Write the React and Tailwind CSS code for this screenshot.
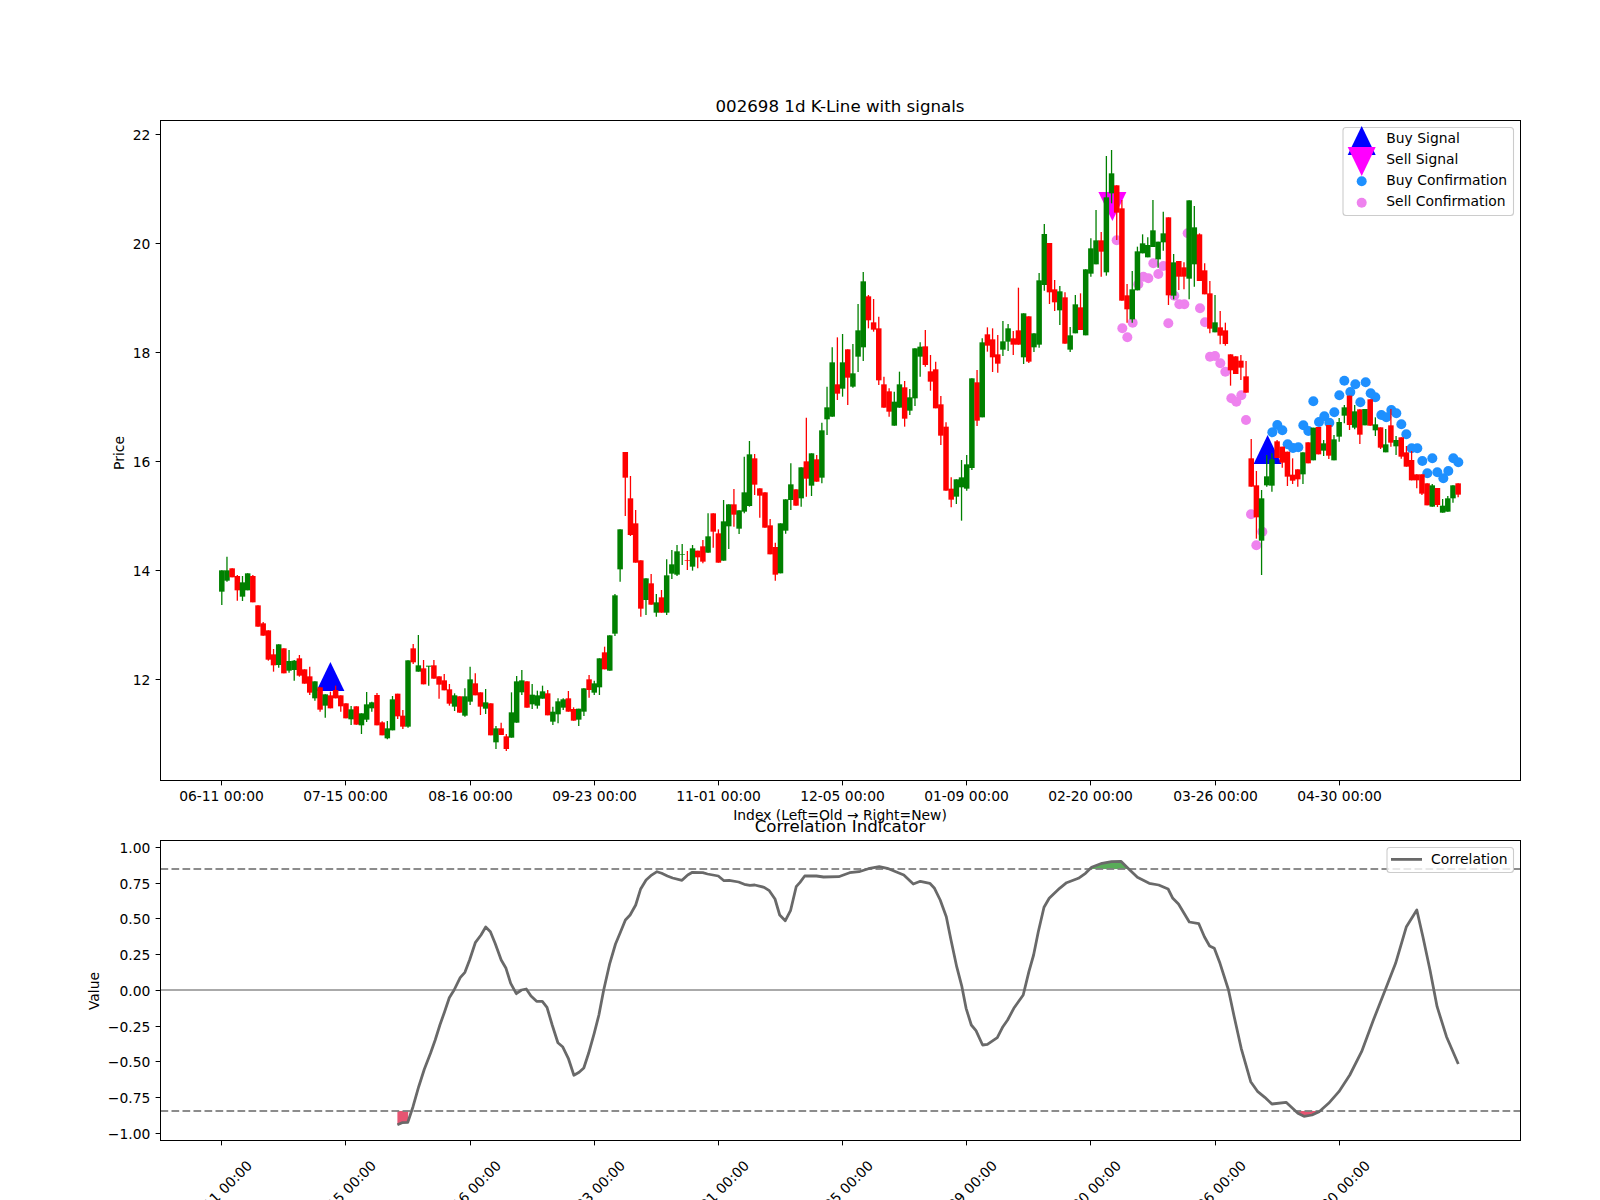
import React from 'react';

const W = 1600;
const AX_L = 160.5;
const AX_R = 1520.5;

// candle index -> px, 240 bars with 5% margins
const barX = (i) => 221.8 + i * 5.173;
const TICKS = ['06-11', '07-15', '08-16', '09-23', '11-01', '12-05', '01-09', '02-20', '03-26', '04-30'];
const tickX = (n) => Math.floor(barX(n * 24)) + 0.5;

const UP = '#008000';
const DOWN = '#ff0000';

// [up, bodyTop, bodyBottom, wickTop, wickBottom] -- y measured on a 3x scale from `base`
const seg = (base, rows) =>
  rows.map(([up, t, b, wt = t, wb = b]) => ({
    up,
    t: base + t / 3,
    b: base + b / 3,
    wt: base + wt / 3,
    wb: base + wb / 3,
  }));

const CANDLES = [
  ...seg(400, [
    [1, 511, 575, 511, 615], [1, 511, 542, 470, 545], [0, 505, 532], [0, 528, 571, 525, 602], [1, 547, 590, 528, 603],
    [1, 520, 571], [0, 528, 607, 525, 607], [0, 616, 680], [0, 670, 707, 666, 707], [0, 691, 779, 691, 782],
    [0, 763, 796, 747, 815], [1, 733, 795, 733, 803], [0, 745, 820], [1, 783, 812, 750, 818], [1, 782, 810, 780, 842],
    [0, 775, 827, 765, 830], [0, 808, 851], [0, 829, 878, 800, 885], [1, 844, 895, 844, 902], [0, 862, 929, 862, 935],
    [1, 883, 917, 883, 953], [0, 886, 925, 875, 925], [0, 870, 895, 857, 895], [0, 886, 919, 886, 935], [0, 910, 955],
    [1, 928, 958, 918, 975], [0, 919, 974], [1, 940, 976, 940, 1002], [1, 913, 959, 876, 966], [1, 907, 925, 905, 935],
    [0, 885, 976, 879, 976], [0, 967, 1006, 964, 1006], [1, 985, 1015, 963, 1018], [1, 898, 991, 888, 991], [0, 881, 949, 881, 957],
    [0, 947, 980, 930, 987], [1, 781, 980, 781, 983], [0, 745, 787, 732, 792], [1, 796, 815, 705, 815], [0, 805, 853, 780, 853],
    [1, 797, 800, 798, 857], [0, 796, 836, 780, 836], [0, 829, 854, 829, 896], [0, 841, 871, 822, 871], [0, 868, 911, 852, 917],
    [1, 886, 920, 880, 933], [0, 889, 938], [1, 889, 947, 865, 950], [1, 838, 905, 800, 915], [0, 850, 886, 820, 886],
    [0, 877, 920, 877, 945], [1, 907, 926, 867, 942], [0, 910, 1006], [1, 985, 1027, 978, 1047], [0, 985, 1005, 968, 1005],
    [0, 1009, 1047, 1002, 1053], [1, 937, 1013, 877, 1013], [1, 844, 968, 828, 968], [1, 841, 877, 810, 885], [0, 844, 923],
    [1, 884, 913, 852, 927], [1, 886, 917, 872, 926], [1, 874, 896, 857, 896], [0, 880, 946, 870, 946], [1, 935, 965, 920, 975],
    [1, 904, 943, 895, 970], [1, 898, 923, 895, 930], [0, 895, 935, 873, 935], [0, 927, 962, 922, 962], [1, 926, 959, 926, 978],
    [1, 865, 935, 865, 948], [0, 838, 870, 825, 893], [1, 850, 878, 842, 885], [1, 775, 862, 775, 885], [0, 757, 808, 740, 808],
    [1, 706, 812], [1, 586, 701, 582, 708],
  ]),
  ...seg(250, [
    [1, 838, 958, 838, 995], [0, 606, 683, 606, 798], [0, 745, 855, 678, 858], [0, 820, 938, 780, 938], [0, 931, 1076, 931, 1100],
    [1, 985, 1050, 985, 1095], [0, 1000, 1064, 972, 1064], [1, 1057, 1088, 1032, 1100], [0, 1042, 1088, 1020, 1088], [1, 976, 1088, 928, 1095],
    [1, 943, 971, 900, 987], [1, 904, 974, 885, 978], [1, 912, 914, 882, 945], [0, 930, 932, 903, 960], [1, 895, 950, 885, 962],
    [0, 902, 922, 902, 955], [0, 889, 935, 870, 940], [1, 859, 908, 790, 908], [0, 790, 845, 790, 893], [0, 850, 938, 838, 938],
    [1, 814, 932, 750, 932], [1, 763, 829, 763, 897], [0, 763, 794, 717, 830], [1, 781, 836, 781, 852], [1, 727, 785, 620, 790],
    [1, 613, 768, 573, 770], [0, 625, 704, 612, 735], [0, 715, 737, 715, 803], [0, 727, 833], [0, 826, 913, 807, 913],
    [0, 891, 974, 878, 992], [1, 820, 970], [1, 748, 842, 748, 851], [1, 703, 750, 640, 780], [0, 718, 767],
    [1, 652, 745, 652, 770], [0, 634, 686, 503, 740], [1, 610, 707, 610, 738], [0, 628, 695, 615, 695], [1, 541, 683, 518, 700],
    [1, 472, 508, 410, 555], [1, 337, 500, 292, 500], [0, 403, 431, 262, 450], [1, 337, 416, 252, 440], [0, 298, 383, 298, 465],
    [1, 370, 410, 282, 413], [1, 241, 320, 162, 366], [1, 94, 292, 66, 333], [0, 139, 211, 135, 235], [0, 217, 239, 147, 245],
    [0, 235, 391, 200, 405], [0, 403, 473, 380, 473], [0, 424, 485, 415, 500], [1, 455, 527, 425, 527], [1, 403, 473, 365, 473],
    [0, 412, 506, 393, 530], [1, 442, 482, 417, 495], [1, 295, 445, 295, 468], [1, 290, 320, 277, 380], [0, 289, 345, 240, 350],
    [0, 364, 395, 315, 422], [0, 358, 475, 335, 475], [0, 463, 557, 438, 585], [0, 530, 722, 517, 722], [0, 716, 749, 682, 772],
    [1, 688, 740, 688, 762], [1, 682, 712, 630, 812], [1, 643, 716, 615, 722], [1, 385, 654, 385, 660], [0, 397, 512, 360, 528],
    [1, 277, 502, 265, 502], [0, 253, 287, 232, 305], [0, 268, 322, 235, 366], [0, 313, 341, 255, 368], [1, 274, 299, 213, 318],
    [1, 235, 275, 222, 303], [0, 265, 284, 243, 315], [0, 241, 284, 113, 284], [1, 190, 322, 190, 342], [0, 199, 335, 199, 339],
    [1, 250, 292, 250, 306], [1, 91, 284, 69, 293], [1, -48, 105, -78, 122], [0, -21, 127, -21, 162], [0, 118, 157, 90, 183],
    [1, 124, 181, 108, 225], [0, 142, 281, 127, 281], [1, 256, 299, 231, 306], [1, 163, 250, 135, 250],
  ]),
  ...seg(100, [
    [0, 622, 690, 580, 690], [1, 508, 706], [1, 445, 521, 415, 530], [1, 421, 493, 330, 493], [0, 421, 455, 396, 530],
    [1, 292, 517, 168, 527], [1, 220, 280, 150, 310], [0, 256, 338, 256, 420], [0, 325, 602, 300, 602], [0, 586, 628, 552, 668],
    [1, 568, 658, 513, 668], [1, 454, 571, 440, 571], [1, 430, 460, 403, 460], [1, 435, 472, 412, 472], [1, 391, 441, 300, 441],
    [1, 425, 478, 425, 503], [1, 400, 427, 335, 452], [0, 352, 586, 352, 615], [1, 487, 587, 462, 598], [0, 483, 530, 483, 570],
    [0, 502, 530, 487, 568], [1, 301, 536, 301, 598], [1, 382, 493, 318, 560], [0, 403, 543, 400, 543], [0, 511, 583, 490, 583],
    [0, 580, 686, 543, 700], [1, 667, 697, 585, 697], [0, 682, 707, 633, 733], [0, 691, 732, 668, 737], [0, 763, 811, 763, 857],
    [0, 769, 822], [0, 782, 803, 765, 840], [0, 829, 878, 783, 878],
  ]),
  ...seg(380, [
    [0, 235, 320, 177, 320], [0, 316, 412, 273, 476], [1, 355, 482, 330, 585], [1, 289, 316, 225, 320], [1, 238, 317, 220, 335],
    [0, 184, 234, 180, 234], [0, 200, 248, 200, 263], [0, 215, 290, 215, 318], [0, 284, 302, 235, 312], [0, 268, 298, 268, 320],
    [1, 217, 283, 217, 312], [0, 187, 250], [1, 143, 241], [0, 141, 223], [1, 190, 212, 180, 228],
    [0, 135, 227, 135, 237], [1, 178, 241, 165, 241], [1, 126, 170, 114, 185], [1, 82, 107, 75, 130], [0, 47, 135, 47, 150],
    [1, 94, 143, 75, 148], [0, 88, 164, 88, 192], [1, 87, 136], [0, 58, 137], [1, 133, 151, 112, 168],
    [0, 142, 203, 142, 207], [1, 193, 217, 147, 217], [0, 136, 188, 87, 200], [1, 180, 199, 168, 225], [0, 172, 230, 172, 236],
    [0, 217, 260, 198, 260], [0, 240, 301, 213, 301], [0, 283, 301, 283, 325], [0, 283, 341, 283, 345], [0, 310, 376],
    [1, 316, 380, 312, 380], [0, 324, 375, 324, 381], [1, 377, 398, 357, 398], [1, 355, 395, 348, 395], [1, 316, 355, 316, 368],
    [0, 310, 344, 310, 352],
  ]),
];

// scatter points, read off the 3x view starting at (ox, oy)
const at = (ox, oy, pts) => pts.map(([x, y]) => [ox + x / 3, oy + y / 3]);

const SELL_CONFIRM = [
  ...at(1060, 100, [
    [170, 421], [250, 530], [265, 535], [295, 522], [280, 490], [310, 498], [235, 553], [218, 668], [187, 685], [202, 712],
    [325, 670], [343, 587], [358, 613], [373, 613], [420, 625], [435, 667], [383, 400], [450, 770], [465, 768], [481, 790],
    [496, 815], [514, 895], [529, 905], [544, 886], [558, 960],
  ]),
  ...at(1100, 380, [[453, 403], [487, 455], [469, 496]]),
];

const BUY_CONFIRM = [
  ...at(1100, 380, [
    [517, 157], [532, 135], [547, 151], [563, 193], [579, 204], [595, 202], [610, 136], [625, 153], [640, 64], [657, 126],
    [673, 109], [688, 128], [703, 97], [718, 46], [751, 36], [781, 67], [812, 40], [826, 52], [844, 105], [859, 112],
    [874, 90], [889, 100], [904, 133], [919, 163], [935, 205], [952, 205], [967, 243], [982, 280], [997, 235], [1012, 277],
    [1030, 295], [1045, 273], [1060, 235], [1075, 247],
  ]),
  ...at(1060, 100, [[853, 842], [886, 853], [917, 847]]),
];

// correlation line, the view was 2.119x wide / 3x tall
const corrPt = (ox) => ([x, y]) => [ox + x / 2.119, 820 + y / 3];
const CORR = [
  ...[
    [715, 914], [725, 908], [737, 907], [748, 860], [760, 800], [772, 748], [785, 700], [795, 660], [805, 615], [815, 575],
    [825, 533], [835, 510], [848, 473], [858, 457], [868, 420], [880, 368], [892, 345], [902, 321], [912, 335], [922, 370],
    [935, 420], [945, 445], [955, 490], [967, 521], [978, 510], [988, 507], [998, 528], [1010, 544], [1022, 544], [1032, 562],
    [1043, 615], [1055, 668], [1065, 680], [1077, 715], [1089, 766], [1100, 757], [1110, 744], [1120, 700], [1132, 640], [1142, 585],
    [1152, 510], [1165, 430], [1177, 372], [1187, 338], [1198, 300], [1208, 285], [1220, 255], [1230, 208], [1242, 180], [1252, 167],
    [1265, 155], [1275, 160], [1287, 168], [1298, 174], [1318, 181], [1330, 165], [1340, 157], [1362, 158], [1372, 162], [1395, 168],
    [1407, 182], [1418, 181], [1438, 186], [1450, 193], [1462, 196], [1472, 195], [1492, 202], [1503, 212], [1515, 237], [1525, 285],
    [1537, 302], [1548, 272], [1560, 200],
  ].map(corrPt(60)),
  ...[
    [0, 187], [10, 168], [35, 168], [50, 171], [82, 170], [105, 158], [125, 155], [145, 146], [168, 140], [185, 145],
    [220, 165], [240, 192], [255, 184], [275, 190], [285, 205], [297, 240], [310, 290], [320, 360], [332, 440], [343, 500],
    [352, 565], [363, 615], [373, 632], [387, 675], [397, 673], [418, 653], [430, 620], [440, 600], [453, 565], [473, 525],
    [485, 455], [495, 405], [505, 335], [517, 262], [528, 235], [550, 205], [565, 188], [590, 175], [605, 160], [618, 142],
    [640, 130], [660, 125], [680, 124], [695, 145], [715, 172], [740, 190], [760, 195], [780, 207], [790, 235], [802, 252],
    [825, 306], [845, 311], [857, 350], [868, 378], [878, 385], [890, 430], [908, 510], [920, 590], [935, 685], [955, 785],
    [970, 815], [985, 832], [1000, 852], [1030, 847], [1055, 880], [1068, 889], [1085, 885], [1100, 875], [1120, 850], [1142, 815],
    [1165, 765], [1190, 695], [1215, 600], [1240, 510], [1262, 430], [1285, 320], [1307, 270], [1320, 350], [1335, 450], [1350, 560],
    [1370, 650], [1395, 732],
  ].map(corrPt(800)),
];

const toPoints = (pts) => pts.map(([x, y]) => `${x.toFixed(1)},${y.toFixed(1)}`).join(' ');

const FILL_LOW_A = [[715, 873], [738, 873], [737, 907], [725, 908], [715, 914]].map(corrPt(60));
const FILL_LOW_B = [[1050, 873], [1068, 889], [1085, 885], [1097, 873]].map(corrPt(800));
const FILL_HIGH = [[612, 147], [640, 130], [660, 125], [680, 124], [697, 147]].map(corrPt(800));

const priceY = (p) => Math.floor(679.3 - (p - 12) * 54.5) + 0.5;
const corrY = (v) => Math.floor(990.3 - v * 143) + 0.5;
const CORR_TICKS = [
  [1, '1.00'], [0.75, '0.75'], [0.5, '0.50'], [0.25, '0.25'], [0, '0.00'],
  [-0.25, '−0.25'], [-0.5, '−0.50'], [-0.75, '−0.75'], [-1, '−1.00'],
];

const Tri = ({ x, y, up, fill }) => (
  <polygon
    points={up ? `${x},${y} ${x - 14},${y + 29} ${x + 14},${y + 29}` : `${x},${y} ${x - 14},${y - 29} ${x + 14},${y - 29}`}
    fill={fill}
  />
);

const Candle = ({ c, i }) => {
  const x = barX(i);
  const color = c.up ? UP : DOWN;
  return (
    <g>
      <line x1={x} x2={x} y1={c.wt} y2={c.wb} stroke={color} strokeWidth="1.3" />
      <rect x={x - 2.75} y={c.t} width="5.5" height={Math.max(c.b - c.t, 0.6)} fill={color} />
    </g>
  );
};

const PricePanel = () => (
  <svg viewBox={`0 0 ${W} 820`} className="block w-[1600px] h-[820px] overflow-visible">
    <text x="840" y="111.5" textAnchor="middle" fontSize="16.67">002698 1d K-Line with signals</text>

    {SELL_CONFIRM.map(([x, y], i) => <circle key={i} cx={x} cy={y} r="5" fill="#ee82ee" />)}
    {BUY_CONFIRM.map(([x, y], i) => <circle key={i} cx={x} cy={y} r="5" fill="#1e90ff" />)}
    <Tri x={330.4} y={662} up fill="#0000ff" />
    <Tri x={1267.6} y={435} up fill="#0000ff" />
    <Tri x={1112.4} y={221} fill="#ff00ff" />

    {CANDLES.map((c, i) => <Candle key={i} c={c} i={i} />)}

    <rect x={AX_L} y="120.5" width={AX_R - AX_L} height="660" fill="none" stroke="#000" strokeWidth="1" />

    {[12, 14, 16, 18, 20, 22].map((p) => (
      <g key={p}>
        <line x1={AX_L - 4.9} x2={AX_L} y1={priceY(p)} y2={priceY(p)} stroke="#000" strokeWidth="1" />
        <text x="150.3" y={priceY(p) + 5} textAnchor="end" fontSize="13.89">{p}</text>
      </g>
    ))}
    {TICKS.map((t, n) => (
      <g key={t}>
        <line x1={tickX(n)} x2={tickX(n)} y1="780.5" y2="785.4" stroke="#000" strokeWidth="1" />
        <text x={tickX(n)} y="801" textAnchor="middle" fontSize="13.89">{t} 00:00</text>
      </g>
    ))}
    <text x="840" y="820" textAnchor="middle" fontSize="13.89">Index (Left=Old → Right=New)</text>
    <text transform="translate(124 453) rotate(-90)" textAnchor="middle" fontSize="13.89">Price</text>

    {/* legend */}
    <rect x="1343" y="127.5" width="170.5" height="88" rx="3" fill="#fff" fillOpacity="0.8" stroke="#ccc" strokeWidth="1.1" />
    <Tri x={1361.7} y={126} up fill="#0000ff" />
    <Tri x={1361.7} y={176} fill="#ff00ff" />
    <circle cx="1361.7" cy="181.3" r="5" fill="#1e90ff" />
    <circle cx="1361.7" cy="202.8" r="5" fill="#ee82ee" />
    {['Buy Signal', 'Sell Signal', 'Buy Confirmation', 'Sell Confirmation'].map((t, i) => (
      <text key={t} x="1386.3" y={142.7 + i * 21} fontSize="13.89">{t}</text>
    ))}
  </svg>
);

const CorrelationPanel = () => (
  <svg viewBox={`0 820 ${W} 380`} className="block w-[1600px] h-[380px] overflow-visible">
    <text x="840" y="831.5" textAnchor="middle" fontSize="16.67">Correlation Indicator</text>

    <polygon points={toPoints(FILL_LOW_A)} fill="#dc143c" fillOpacity="0.72" />
    <polygon points={toPoints(FILL_LOW_B)} fill="#dc143c" fillOpacity="0.72" />
    <polygon points={toPoints(FILL_HIGH)} fill="#008000" fillOpacity="0.65" />

    <line x1={AX_L} x2={AX_R} y1="869" y2="869" stroke="#808080" strokeWidth="2.08" strokeDasharray="7.7 3.3" strokeOpacity="0.9" />
    <line x1={AX_L} x2={AX_R} y1="1111" y2="1111" stroke="#808080" strokeWidth="2.08" strokeDasharray="7.7 3.3" strokeOpacity="0.9" />
    <line x1={AX_L} x2={AX_R} y1="990" y2="990" stroke="#aaaaaa" strokeWidth="2.08" />
    <polyline points={toPoints(CORR)} fill="none" stroke="#696969" strokeWidth="2.78" strokeLinejoin="round" />

    <rect x={AX_L} y="840.5" width={AX_R - AX_L} height="300" fill="none" stroke="#000" strokeWidth="1" />

    {CORR_TICKS.map(([v, label]) => (
      <g key={label}>
        <line x1={AX_L - 4.9} x2={AX_L} y1={corrY(v)} y2={corrY(v)} stroke="#000" strokeWidth="1" />
        <text x="150.3" y={corrY(v) + 5} textAnchor="end" fontSize="13.89">{label}</text>
      </g>
    ))}
    {TICKS.map((t, n) => (
      <g key={t}>
        <line x1={tickX(n)} x2={tickX(n)} y1="1140.5" y2="1145.4" stroke="#000" strokeWidth="1" />
        <text
          transform={`translate(${tickX(n) - 2} 1193) rotate(-45)`}
          textAnchor="middle"
          dominantBaseline="central"
          fontSize="13.89"
        >
          {t} 00:00
        </text>
      </g>
    ))}
    <text transform="translate(99 991) rotate(-90)" textAnchor="middle" fontSize="13.89">Value</text>

    {/* legend */}
    <rect x="1387" y="847.5" width="126.5" height="25" rx="3" fill="#fff" fillOpacity="0.8" stroke="#ccc" strokeWidth="1.1" />
    <line x1="1391" x2="1422" y1="859.4" y2="859.4" stroke="#696969" strokeWidth="2.78" />
    <text x="1431" y="863.7" fontSize="13.89">Correlation</text>
  </svg>
);

export default function App() {
  return (
    <div className="w-[1600px] h-[1200px] overflow-hidden bg-white font-['DejaVu_Sans',sans-serif]">
      <PricePanel />
      <CorrelationPanel />
    </div>
  );
}
